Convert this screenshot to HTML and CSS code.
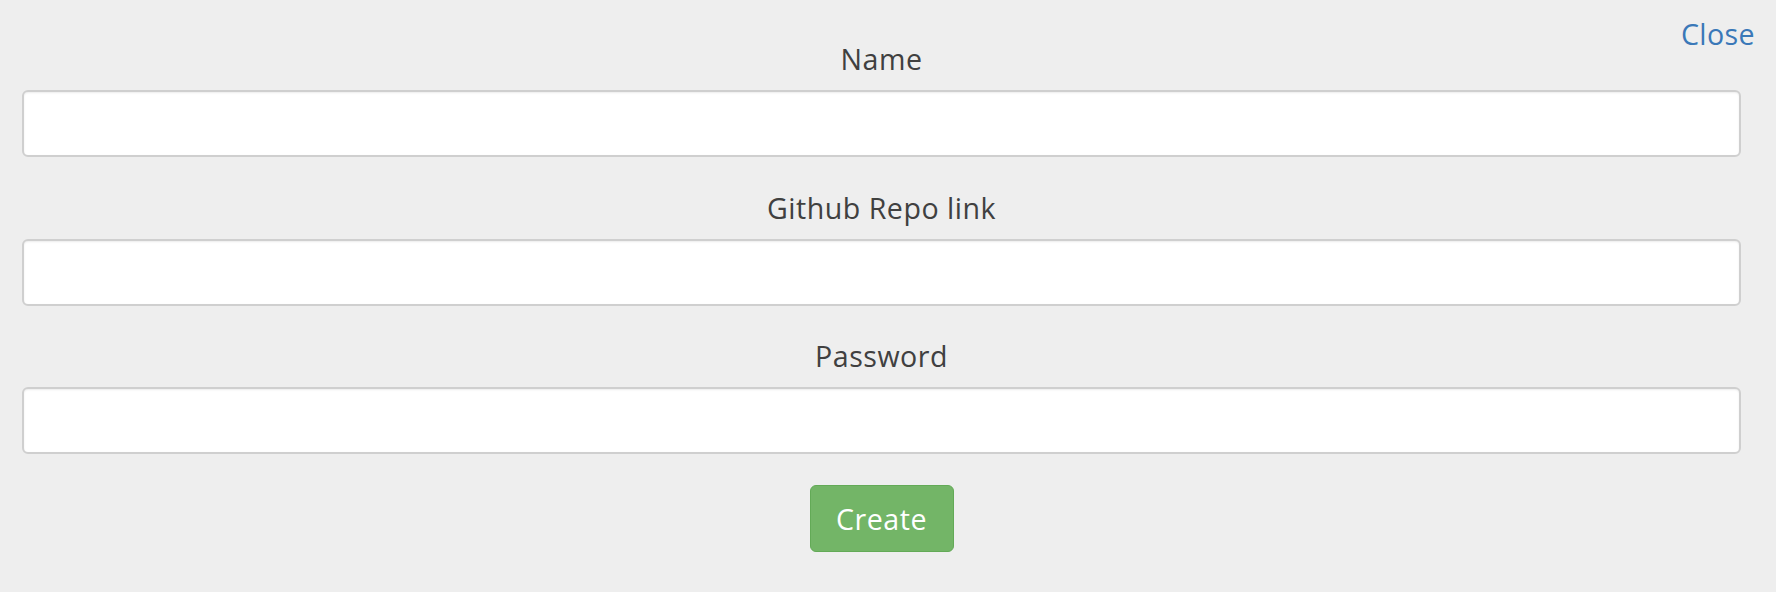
FILE: index.html
```html
<!DOCTYPE html>
<html lang="en">
<head>
<meta charset="utf-8">
<title>Create project</title>
<link rel="stylesheet" href="styles.css">
</head>
<body>
<div class="panel">
  <a class="close" href="#">Close</a>
  <form class="form">
    <div class="group">
      <label class="label" for="name">Name</label>
      <input class="field" id="name" type="text">
    </div>
    <div class="group">
      <label class="label" for="repo">Github Repo link</label>
      <input class="field" id="repo" type="text">
    </div>
    <div class="group">
      <label class="label" for="password">Password</label>
      <input class="field" id="password" type="password">
    </div>
    <div class="actions">
      <button class="btn" type="button">Create</button>
    </div>
  </form>
</div>
</body>
</html>
```

FILE: styles.css
```css
html, body {
  margin: 0;
  padding: 0;
  background: #eeeeee;
}

body {
  font-family: "Open Sans", "Liberation Sans", sans-serif;
  width: 1776px;
  height: 592px;
  overflow: hidden;
}

.panel {
  position: relative;
  height: 592px;
}

.close {
  position: absolute;
  top: 14px;
  right: 21px;
  font-size: 28.6px;
  line-height: 40px;
  letter-spacing: 0.4px;
  color: #3a78b8;
  text-decoration: none;
}

.form {
  display: flex;
  flex-direction: column;
  gap: 30.5px;
  padding: 39px 35px 0 22px;
}

.group {
  display: flex;
  flex-direction: column;
}

.label {
  display: block;
  text-align: center;
  font-size: 28.6px;
  line-height: 40px;
  font-weight: 500;
  letter-spacing: 0.5px;
  color: #404040;
  margin-bottom: 11px;
}

.field {
  display: block;
  box-sizing: border-box;
  width: 100%;
  height: 67px;
  margin: 0;
  padding: 0 16px;
  background: #ffffff;
  border: 2px solid #cfcfcf;
  border-radius: 6px;
  box-shadow: inset 0 1px 2px rgba(0, 0, 0, 0.08);
  font-family: inherit;
  font-size: 24px;
  outline: none;
}

.actions {
  display: flex;
  justify-content: center;
}

.btn {
  box-sizing: border-box;
  width: 144px;
  height: 67px;
  margin: 0;
  padding: 0;
  background: #73b567;
  border: 1.5px solid #63aa57;
  border-radius: 6px;
  color: #ffffff;
  font-family: inherit;
  font-size: 28.6px;
  font-weight: 400;
  letter-spacing: 0.5px;
  cursor: pointer;
}
```
